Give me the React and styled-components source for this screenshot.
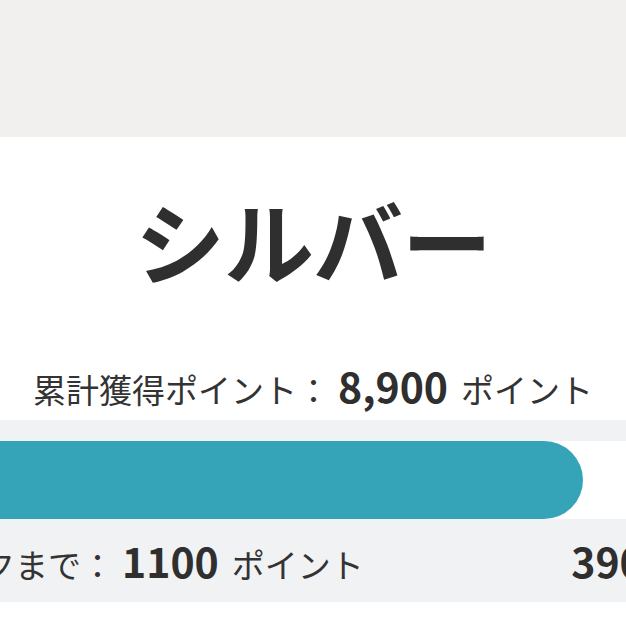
import React from "react";
import styled, { createGlobalStyle } from "styled-components";

const Global = createGlobalStyle`
  html, body { margin: 0; padding: 0; background: #ffffff; }
  body {
    font-family: "Noto Sans CJK JP", "Noto Sans", sans-serif;
    color: #333333;
    overflow: hidden;
  }
`;

const Page = styled.div`
  width: 626px;
  height: 626px;
  overflow: hidden;
  display: flex;
  flex-direction: column;
  background: #ffffff;
`;

const Header = styled.div`
  height: 137px;
  flex: none;
  background: #f1f0ee;
`;

const RankTitle = styled.h1`
  margin: 58px 0 0;
  font-size: 90px;
  line-height: 88px;
  font-weight: 700;
  text-align: center;
  color: #2f2f2f;
  letter-spacing: -1px;
`;

const TotalLine = styled.div`
  margin-top: 78px;
  display: flex;
  justify-content: center;
  align-items: baseline;
  height: 48px;
  line-height: 48px;
  font-size: 33px;
  color: #333333;
  white-space: nowrap;
`;

const Num = styled.span`
  font-size: 41px;
  font-weight: 700;
  color: #2f2f2f;
  margin: ${(p) => p.$m || "0 13px 0 8px"};
`;

const ProgressSection = styled.div`
  margin-top: 11px;
  background: #f0f2f3;
  padding: 21px 0 18px;
`;

const ProgressInner = styled.div`
  margin: 0 -187px 0 -150px;
  display: flex;
  flex-direction: column;
`;

const Track = styled.div`
  height: 78px;
  border-radius: 39px;
  background: #ffffff;
  overflow: hidden;
`;

const Fill = styled.div`
  height: 100%;
  border-radius: 39px;
  background: #36a4b8;
`;

const InfoRow = styled.div`
  display: flex;
  justify-content: space-between;
  align-items: baseline;
  margin-top: 17px;
  height: 48px;
  line-height: 48px;
  font-size: 33px;
  white-space: nowrap;
`;

const Info = styled.div`
  display: flex;
  align-items: baseline;
`;

export default function App() {
  const fillPct = (733 / 963) * 100;
  return (
    <>
      <Global />
      <Page>
        <Header />
        <RankTitle>シルバー</RankTitle>
        <TotalLine>
          累計獲得ポイント：<Num>8,900</Num>ポイント
        </TotalLine>
        <ProgressSection>
          <ProgressInner>
            <Track>
              <Fill style={{ width: `${fillPct}%` }} />
            </Track>
            <InfoRow>
              <Info>
                次のランクまで：<Num>1100</Num>ポイント
              </Info>
              <Info>
                <Num $m="0 13px 0 0">3900</Num>ポイント
              </Info>
            </InfoRow>
          </ProgressInner>
        </ProgressSection>
      </Page>
    </>
  );
}
